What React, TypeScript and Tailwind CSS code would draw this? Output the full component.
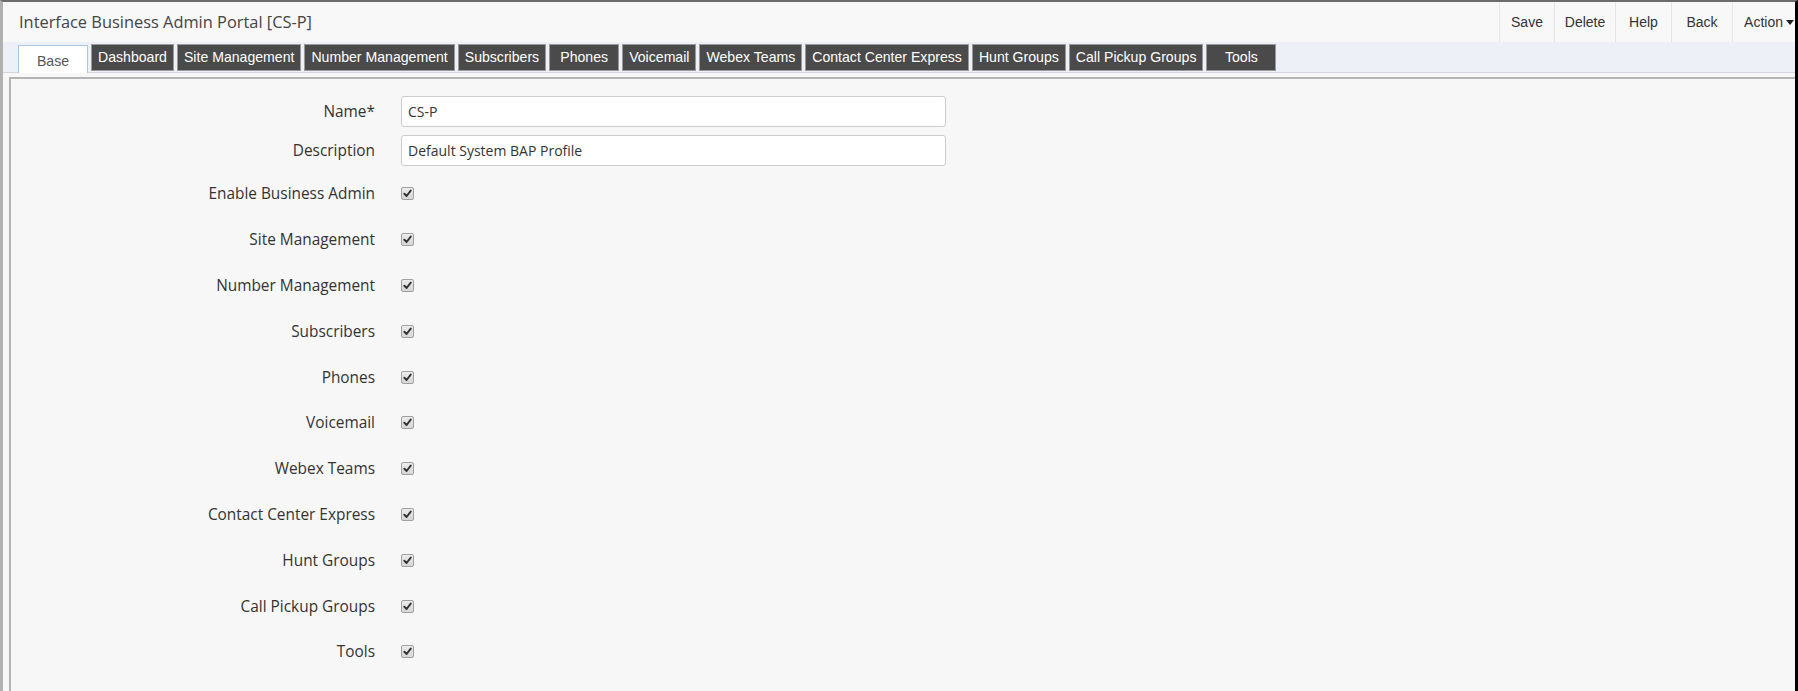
import React, { useState } from 'react';

const tabs = [
  'Base',
  'Dashboard',
  'Site Management',
  'Number Management',
  'Subscribers',
  'Phones',
  'Voicemail',
  'Webex Teams',
  'Contact Center Express',
  'Hunt Groups',
  'Call Pickup Groups',
  'Tools',
];

const flags = [
  'Enable Business Admin',
  'Site Management',
  'Number Management',
  'Subscribers',
  'Phones',
  'Voicemail',
  'Webex Teams',
  'Contact Center Express',
  'Hunt Groups',
  'Call Pickup Groups',
  'Tools',
];

const actions = [
  { label: 'Save', w: 'w-[55px]' },
  { label: 'Delete', w: 'w-[61px]' },
  { label: 'Help', w: 'w-[56px]' },
  { label: 'Back', w: 'w-[61px]' },
];

const CheckMark: React.FC<{ checked: boolean; onClick: () => void }> = ({ checked, onClick }) => (
  <button
    type="button"
    onClick={onClick}
    className="w-[13px] h-[13px] rounded-[2px] border border-[#a0a0a0] bg-gradient-to-b from-[#ececec] to-[#d6d6d6] flex items-center justify-center"
  >
    {checked && (
      <svg width="9" height="9" viewBox="0 0 10 10">
        <path d="M1.5 5.3 L4 7.8 L8.6 1.8" fill="none" stroke="#333" strokeWidth="2.1" strokeLinecap="round" strokeLinejoin="round" />
      </svg>
    )}
  </button>
);

const App: React.FC = () => {
  const [activeTab, setActiveTab] = useState('Base');
  const [name, setName] = useState('CS-P');
  const [description, setDescription] = useState('Default System BAP Profile');
  const [checked, setChecked] = useState<Record<string, boolean>>(
    Object.fromEntries(flags.map(f => [f, true]))
  );

  const toggle = (f: string) => setChecked(prev => ({ ...prev, [f]: !prev[f] }));

  return (
    <div className="w-full h-[691px] overflow-hidden flex flex-col bg-[#f7f7f7] border-t-2 border-t-[#6b6b6b] border-l-[3px] border-l-[#b0b0b0] border-r-[3px] border-r-black">
      {/* header */}
      <div className="h-[40px] flex items-stretch justify-between bg-[#f8f8f8]">
        <div className="flex items-center pl-[16px] text-[16.4px] text-[#444] font-['Open_Sans',sans-serif]">
          Interface Business Admin Portal [CS-P]
        </div>
        <div className="flex items-stretch font-['Liberation_Sans',Arial,sans-serif] text-[14px] text-[#333]">
          {actions.map(a => (
            <button key={a.label} className={`${a.w} border-l border-[#e6e6e6] flex items-center justify-center hover:bg-[#eee]`}>
              {a.label}
            </button>
          ))}
          <button className="w-[63px] border-l border-[#e6e6e6] flex items-center justify-end pr-[1px] gap-[3px]">
            Action
            <svg width="8" height="5" viewBox="0 0 8 5">
              <path d="M0 0 H8 L4 5 Z" fill="#222" />
            </svg>
          </button>
        </div>
      </div>

      {/* tab bar */}
      <div className="h-[31px] bg-[#edf0f7] border-b border-[#d2d5dc] flex items-end pl-[15px] gap-[3px] font-['Liberation_Sans',Arial,sans-serif] text-[14.1px]">
        {tabs.map(t =>
          t === activeTab ? (
            <div
              key={t}
              onClick={() => setActiveTab(t)}
              className="h-[28px] min-w-[70px] px-[6px] flex items-center justify-center pt-[4px] bg-white text-[#555] border border-b-0 border-[#a9c8e0] mb-[-1px] cursor-pointer"
            >
              {t}
            </div>
          ) : (
            <div
              key={t}
              onClick={() => setActiveTab(t)}
              className="h-[27px] min-w-[70px] px-[6px] flex items-center justify-center bg-[#4a4a4a] text-white border border-[#9a9a9a] mb-[1px] cursor-pointer"
            >
              {t}
            </div>
          )
        )}
      </div>

      {/* content panel */}
      <div className="flex-1 mt-[4px] ml-[6px] border-t-2 border-l-2 border-[#b4b4b4] bg-[#f7f7f7] pt-[17px] font-['Open_Sans',sans-serif] text-[15.4px] text-[#333]">
        <div className="flex flex-col gap-[8px]">
          <div className="flex items-center">
            <label className="w-[364px] text-right">Name*</label>
            <input
              value={name}
              onChange={e => setName(e.target.value)}
              className="ml-[26px] w-[545px] h-[31px] bg-white border border-[#ccc] rounded-[3px] px-[6px] text-[14px] text-[#333] outline-none"
            />
          </div>
          <div className="flex items-center">
            <label className="w-[364px] text-right">Description</label>
            <input
              value={description}
              onChange={e => setDescription(e.target.value)}
              className="ml-[26px] w-[545px] h-[31px] bg-white border border-[#ccc] rounded-[3px] px-[6px] text-[14px] text-[#333] outline-none"
            />
          </div>
        </div>
        <div className="mt-[5px] flex flex-col">
          {flags.map(f => (
            <div key={f} className="h-[45.8px] flex items-center">
              <span className="w-[364px] text-right">{f}</span>
              <span className="ml-[26px]">
                <CheckMark checked={checked[f]} onClick={() => toggle(f)} />
              </span>
            </div>
          ))}
        </div>
      </div>
    </div>
  );
};

export default App;
